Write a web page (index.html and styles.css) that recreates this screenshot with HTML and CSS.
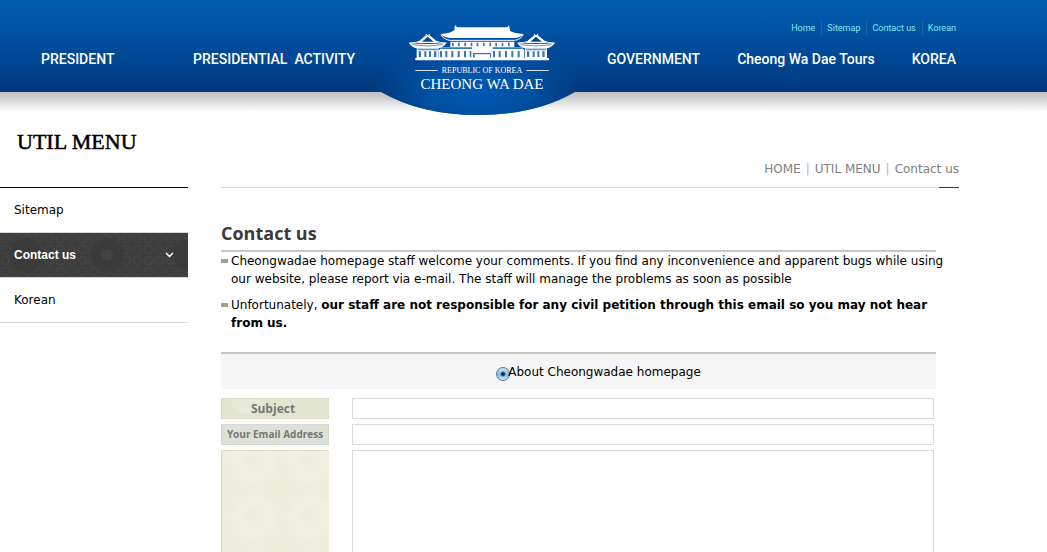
FILE: index.html
```html
<!DOCTYPE html>
<html lang="en">
<head>
    <meta charset="UTF-8">
    <meta name="viewport" content="width=device-width, initial-scale=1.0">
    <title>Cheong Wa Dae - Contact us</title>
    <link rel="stylesheet" href="styles.css">
</head>
<body>
    <header class="header">
        <div class="header-inner">
            <nav class="menu menu-left">
                <a href="#">PRESIDENT</a>
                <a href="#">PRESIDENTIAL&nbsp; ACTIVITY</a>
            </nav>
            <a class="logo" href="#">
                <svg width="216" height="116" viewBox="0 0 216 116" role="img" aria-label="Cheong Wa Dae">
                    <defs>
                        <radialGradient id="glow">
                            <stop offset="0" stop-color="#0059b4"/>
                            <stop offset="0.5" stop-color="#0055aa" stop-opacity="0.8"/>
                            <stop offset="1" stop-color="#004c9c" stop-opacity="0"/>
                        </radialGradient>
                        <clipPath id="bulge">
                            <path d="M0 0H216V92H205Q165 115 108 115Q51 115 11 92H0Z"/>
                        </clipPath>
                    </defs>
                    <g clip-path="url(#bulge)">
                        <path fill="#003a7c" d="M9 92H207V116H9Z"/>
                        <ellipse cx="108" cy="90" rx="108" ry="54" fill="url(#glow)"/>
                    </g>
                    <!-- the Blue House -->
                    <g transform="scale(0.33333)" fill="#fff" stroke-linejoin="round">
                        <path d="M255 75l7 7h150l5-7 3 17q12 8 40 10-8 10-25 12H239q-17-2-27-12 30-2 41-11z"/>
                        <path d="M213 104q8 15 27 17H434q18-2 26-18" fill="none" stroke="#fff" stroke-width="3"/>
                        <path d="M241 125h192v16h22l8 9v24H207v-24l10-9h24z"/>
                        <g fill="#3a76b0">
                            <path d="M246 128h5v11h-5zM264 128h5v11h-5zM283 128h5v11h-5zM302 128h5v11h-5zM320 128h5v11h-5zM339 128h5v11h-5zM358 128h5v11h-5zM376 128h5v11h-5zM395 128h5v11h-5zM414 128h5v11h-5z"/>
                            <path d="M216 142h90v5h-94zM368 142h87l4 5h-91z"/>
                            <path d="M210 153h6v19h-6zM226 153h6v19h-6zM244 153h6v19h-6zM263 153h6v19h-6zM282 153h6v19h-6zM299 153h5v19h-5zM369 153h6v19h-6zM386 153h6v19h-6zM405 153h6v19h-6zM424 153h6v19h-6zM443 153h6v19h-6z"/>
                        </g>
                        <path fill="#3a76b0" d="M309 158h54v15h-54z"/>
                        <path d="M314 144h44l8 10v4h-60v-4zM314 163h46v11h-46z"/>
                        <g id="pavilion">
                            <path fill="#004c99" stroke="#fff" stroke-width="3" d="M118 129q20 0 30-5l22-19-3-3M229 129q-20 0-30-5l-23-19 3-3"/>
                            <path fill="#fff" d="M148 124l25-20 27 20 6 5h-65z"/>
                            <path fill="#004c99" d="M156 125l17-15 18 15z"/>
                            <path d="M117 129q56 6 112 0-8 13-24 16h-64q-16-3-24-16z"/>
                            <path d="M126 134q47 8 94 0" fill="none" stroke="#1b5d9e" stroke-width="2"/>
                            <path d="M140 145h66v29h-66z"/>
                            <path fill="#3a76b0" d="M143 148h60v3h-60zM146 154h7v17h-7zM163 154h6v17h-6zM177 154h6v17h-6zM192 154h7v17h-7z"/>
                        </g>
                        <use href="#pavilion" x="325"/>
                        <path d="M136 174h401v7H136z"/>
                        <path d="M136 210h67v3h-67zM469 210h67v3h-67z" fill="#d6e4f2"/>
                    </g>
                    <text class="logo-small" x="112" y="73" text-anchor="middle">REPUBLIC OF KOREA</text>
                    <text class="logo-name" x="112" y="89" text-anchor="middle">CHEONG WA DAE</text>
                </svg>
            </a>
            <div class="header-right">
                <nav class="util">
                    <a href="#">Home</a>
                    <a href="#">Sitemap</a>
                    <a href="#">Contact us</a>
                    <a href="#">Korean</a>
                </nav>
                <nav class="menu">
                    <a href="#">GOVERNMENT</a>
                    <a href="#">Cheong Wa Dae Tours</a>
                    <a href="#">KOREA</a>
                </nav>
            </div>
        </div>
    </header>

    <div class="page">
        <div class="container">
            <aside class="sidebar">
                <h2 class="side-title">UTIL MENU</h2>
                <ul class="side-menu">
                    <li><a href="#">Sitemap</a></li>
                    <li>
                        <a class="active" href="#">Contact us
                            <svg width="9" height="6" viewBox="0 0 9 6"><path d="M1 1l3.5 3.5L8 1" fill="none" stroke="#fff" stroke-width="1.5"/></svg>
                        </a>
                    </li>
                    <li><a href="#">Korean</a></li>
                </ul>
            </aside>

            <main class="content">
                <div class="path">
                    <a href="#">HOME</a><span class="bar">|</span><a href="#">UTIL MENU</a><span class="bar">|</span><a href="#">Contact us</a>
                </div>
                <div class="body">
                    <h1>Contact us</h1>
                    <ul class="notice">
                        <li>Cheongwadae homepage staff welcome your comments. If you find any inconvenience and apparent bugs while using our website, please report via e-mail. The staff will manage the problems as soon as possible</li>
                        <li>Unfortunately, <b>our staff are not responsible for any civil petition through this email so you may not hear from us.</b></li>
                    </ul>
                    <form action="">
                        <div class="about">
                            <input type="radio" name="about" id="about" checked><label for="about">About Cheongwadae homepage</label>
                        </div>
                        <div class="fields">
                            <label class="subject" for="subject">Subject</label>
                            <input type="text" id="subject" name="subject">
                            <label class="email" for="email">Your Email Address</label>
                            <input type="email" id="email" name="email">
                            <label class="message" for="message"></label>
                            <textarea id="message" name="message" aria-label="Message"></textarea>
                        </div>
                    </form>
                </div>
            </main>
        </div>
    </div>
</body>
</html>
```
FILE: styles.css
```css
* {
    box-sizing: border-box;
}
body {
    margin: 0;
    background: #fff;
    color: #000;
    font: 12px/18px Verdana, "DejaVu Sans", sans-serif;
}
a {
    color: inherit;
    text-decoration: none;
}
ul {
    list-style: none;
    margin: 0;
    padding: 0;
}

/* header */
.header {
    height: 92px;
    background: linear-gradient(#005bae, #0053a5 30%, #004590 70%, #003878);
}
.header-inner {
    display: grid;
    grid-template-columns: 1fr 216px 1fr;
    max-width: 956px;
    height: 92px;
    font-family: Roboto, sans-serif;
}
.menu {
    display: flex;
    justify-content: space-between;
    color: #fff;
    font-size: 14px;
    font-weight: 500;
    line-height: 18px;
    white-space: nowrap;
}
.menu-left {
    padding: 50px 15px 0 41px;
}
.header-right {
    padding: 20px 0 0 21px;
}
.util {
    display: flex;
    justify-content: flex-end;
    margin-bottom: 14px;
    color: #7fe9f5;
    font-size: 9px;
    line-height: 16px;
}
.util a + a {
    margin-left: 6px;
    padding-left: 5px;
    border-left: 1px solid #1c62a6;
}
.logo {
    height: 116px;
}
.logo svg {
    display: block;
}
.logo text {
    fill: #fff;
    font-family: "Liberation Serif", serif;
}
.logo-small {
    font-size: 8px;
}
.logo-name {
    font-size: 15px;
}

/* page */
.page {
    background: linear-gradient(#c0c0c0, #cbcbcb 5px, #fff 19px) no-repeat;
}
.container {
    display: grid;
    grid-template-columns: 188px 1fr;
    gap: 33px;
    max-width: 959px;
}
.side-title {
    margin: 0;
    padding: 36px 0 31px 17px;
    border-bottom: 1px solid #000;
    font: 22px/28px "Liberation Serif", serif;
    -webkit-text-stroke: 0.5px #000;
}
.side-menu li {
    border-bottom: 1px solid #d9d9d9;
}
.side-menu a {
    display: flex;
    align-items: center;
    justify-content: space-between;
    height: 44px;
    padding: 0 14px;
}
.side-menu .active {
    color: #fff;
    font-family: "Liberation Sans", sans-serif;
    font-weight: bold;
    background:
        radial-gradient(circle at 107px 22px, #434343 5px, #393939 7px, #3b3b3b 16px, transparent 18px),
        radial-gradient(circle at 26px 22px, #3a3a3a 16px, transparent 18px),
        radial-gradient(circle at 188px 22px, #3a3a3a 14px, transparent 16px),
        radial-gradient(circle, transparent 3px, #464646 4px, transparent 5px) 0 0 / 11px 11px,
        #3e3e3e;
}

/* content */
.path {
    display: flex;
    justify-content: flex-end;
    padding: 68px 0 9px;
    border-bottom: 1px solid;
    border-image: linear-gradient(to left, #8a1a2a 21px, #d9d9d9 21px) 1;
    color: #808080;
}
.bar {
    margin: 0 5px;
    color: #b5b5b5;
}
.body {
    padding: 33px 23px 40px 0;
}
h1 {
    margin: 0;
    padding-bottom: 5px;
    border-bottom: 2px solid #c8c8be;
    color: #3a3a3a;
    font: bold 18px/24px "Open Sans", sans-serif;
}
.notice {
    margin-right: -12px;
}
.notice li {
    padding-left: 10px;
    margin-bottom: 8px;
    background: linear-gradient(#a3a085, #a3a085) 0 7px / 7px 4px no-repeat;
}
.about {
    display: flex;
    align-items: center;
    justify-content: center;
    height: 37px;
    margin-top: 20px;
    padding-left: 40px;
    border-top: 2px solid #c8c8be;
    background: #f6f6f6;
}
.about input {
    appearance: none;
    width: 14px;
    height: 14px;
    margin: 4px -2px 0 0;
    border: 1px solid #5a7391;
    border-radius: 50%;
    background: radial-gradient(circle, #0a1a30 1px, transparent 3px), linear-gradient(#cfe2f5, #7fbcee 55%, #c5f0ff);
}
.fields {
    display: grid;
    grid-template-columns: 108px 1fr;
    gap: 5px 23px;
    padding: 9px 2px 0 0;
}
.fields label {
    border: 1px solid #dcdcc8;
    color: #777;
    font: bold 12px/19px "Open Sans", sans-serif;
    text-align: center;
}
.fields .subject {
    background: radial-gradient(circle at 24px 0, #e7ebd7 14px, transparent 16px), #e2e6cf;
    padding-right: 4px;
}
.fields .email {
    border-color: #d6dacf;
    background: #dde2d8;
    font-size: 10px;
}
.fields .message {
    border-right-color: #efedde;
    background:
        radial-gradient(circle, #efeddf 8px, #f1efe2 11px, #f1efe2 20px, transparent 24px) 4px -18px / 56px 56px,
        #efedde;
}
.fields input,
.fields textarea {
    display: block;
    width: 100%;
    height: 21px;
    margin: 0;
    padding: 0 4px;
    border: 1px solid #dadada;
    border-radius: 0;
    background: #fff;
    font: inherit;
}
.fields textarea {
    height: 200px;
    resize: none;
}
```
